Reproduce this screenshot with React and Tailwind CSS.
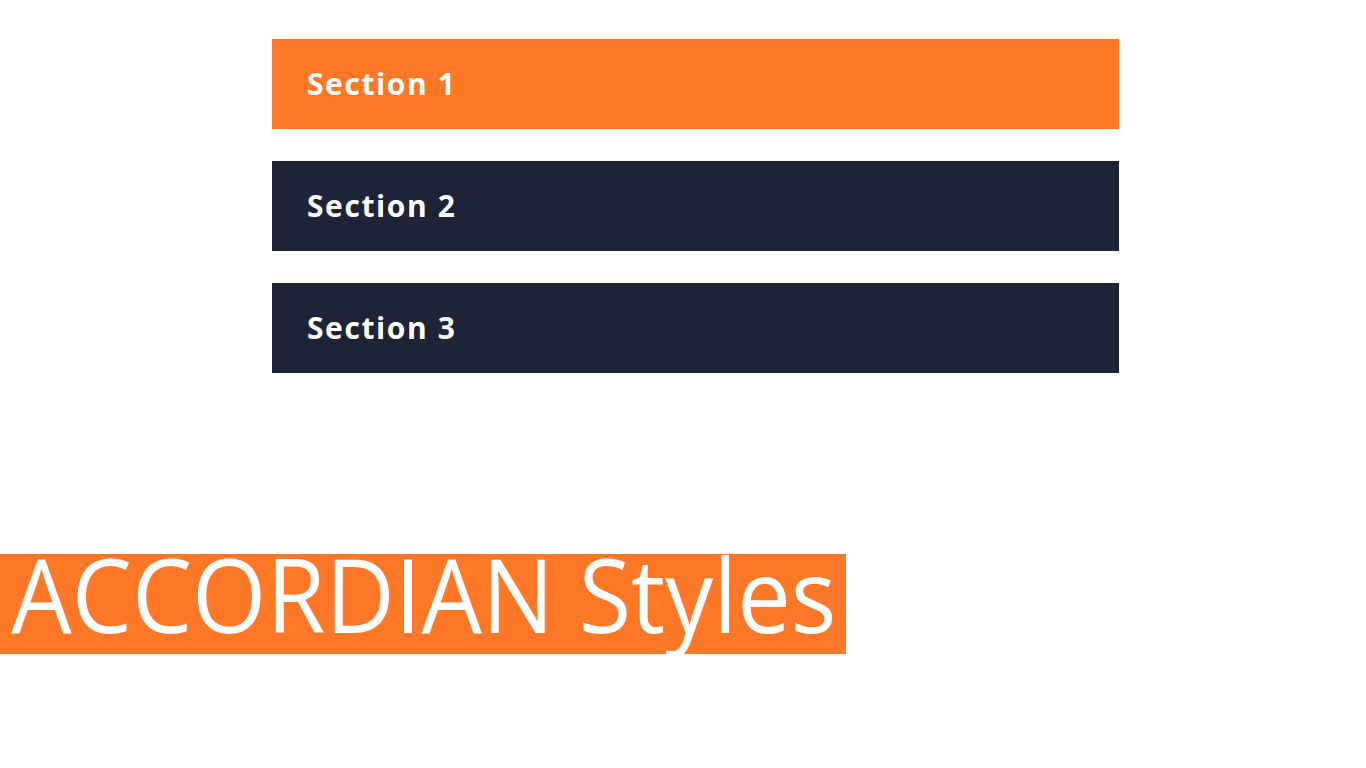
export default function App() {
  const sections = [
    { label: "Section 1", active: true },
    { label: "Section 2", active: false },
    { label: "Section 3", active: false },
  ];
  return (
    <div className="w-[1366px] h-[768px] bg-white overflow-hidden relative" style={{ fontFamily: '"Open Sans", sans-serif' }}>
      <div className="pt-[39px] pl-[272px] flex flex-col gap-[32px]">
        {sections.map((s) => (
          <div
            key={s.label}
            className={`w-[847px] h-[90px] flex items-center pl-[35px] ${s.active ? "bg-[#ff7828]" : "bg-[#1e2337]"}`}
          >
            <span className="text-white font-bold text-[30px] tracking-[1.6px] leading-none">{s.label}</span>
          </div>
        ))}
      </div>
      <div className="mt-[181px] w-[846px] h-[100px] bg-[#ff7828] flex items-start overflow-visible">
        <span
          className="text-white text-[102px] leading-none font-normal whitespace-nowrap origin-left scale-x-[0.937] block pl-[12px] -mt-[11px]"
        >
          ACCORDIAN Styles
        </span>
      </div>
    </div>
  );
}
